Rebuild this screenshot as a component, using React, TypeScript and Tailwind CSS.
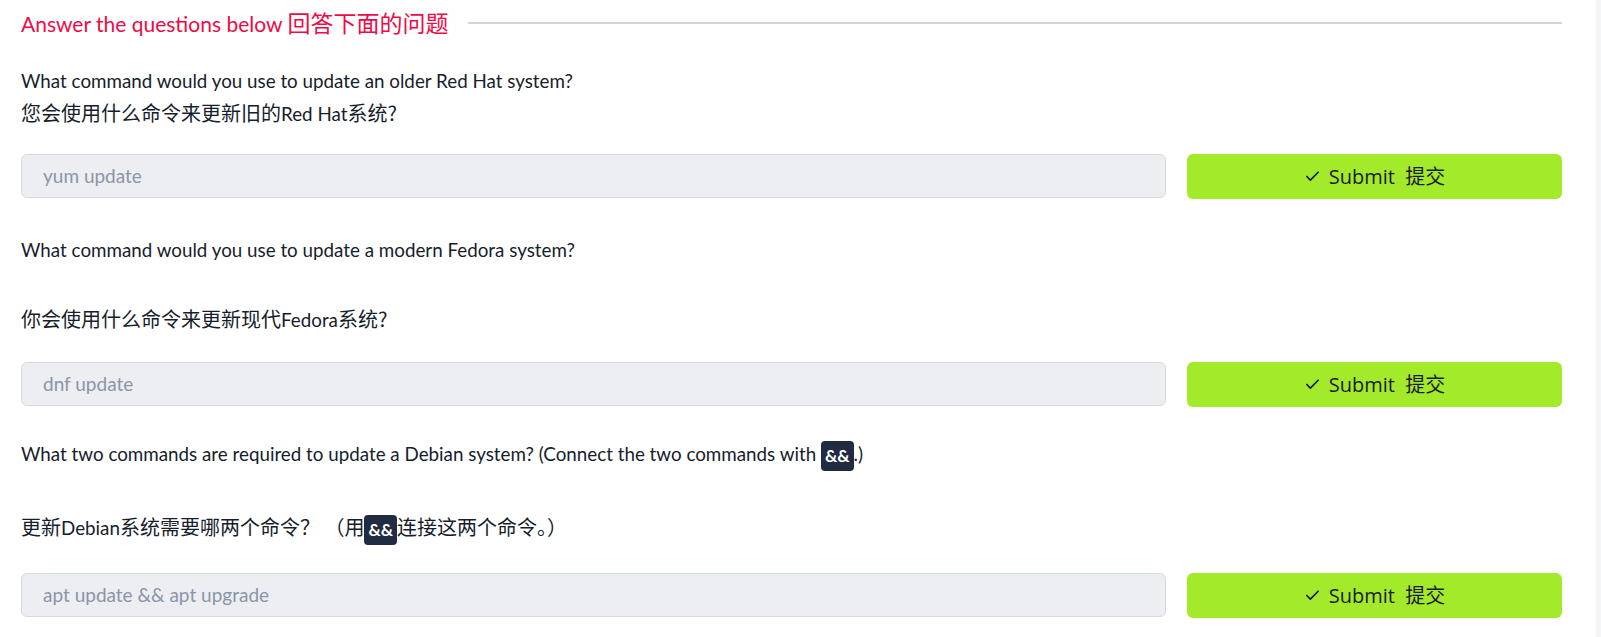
import React from "react";
import { Check } from "lucide-react";

const body = { fontFamily: 'Lato, "Noto Sans CJK SC", sans-serif' };
const cjk = { fontFamily: '"Noto Sans CJK SC", sans-serif' };

function L({ children }: { children: React.ReactNode }) {
  return (
    <span className="text-[18.8px]" style={body}>
      {children}
    </span>
  );
}

function Code({ children }: { children: React.ReactNode }) {
  return (
    <code
      className="inline-block h-[30px] px-[4px] rounded-[4px] bg-[#212c42] text-white font-bold text-[17px] leading-[30px] align-middle"
      style={body}
    >
      {children}
    </code>
  );
}

function AnswerRow({ placeholder, mt }: { placeholder: string; mt: string }) {
  return (
    <div className={`flex gap-[21px] ${mt}`}>
      <div className="flex-1 h-[44px] rounded-[6px] border border-[#d5d9e0] bg-[#eceef2] flex items-center pl-[21px] text-[19px] text-[#8b95a7]">
        {placeholder}
      </div>
      <button
        className="w-[375px] h-[45px] rounded-[6px] bg-[#a3ea2a] flex items-center justify-center gap-[8px] text-[#1b1b2b] text-[20px]"
        style={{ fontFamily: '"Open Sans", "Noto Sans CJK SC", sans-serif' }}
      >
        <Check size={17} strokeWidth={2.4} />
        <span>
          Submit&nbsp;&nbsp;<span style={cjk}>提交</span>
        </span>
      </button>
    </div>
  );
}

export default function App() {
  return (
    <div className="flex w-[1601px] h-[637px] bg-white overflow-hidden" style={body}>
      <div className="flex-1 pl-[21px] pr-[34px] text-[#161d2c] text-[18.8px] leading-[32px]">
        <div className="flex items-center h-[45px] gap-[20px]">
          <h2 className="text-[21px] text-[#f00a46] whitespace-nowrap leading-[32px]">
            Answer the questions below <span className="text-[23px]" style={cjk}>回答下面的问题</span>
          </h2>
          <div className="flex-1 h-[2px] bg-[#d1d5db]" />
        </div>

        <p className="mt-[20px]">
          What command would you use to update an older Red Hat system?
          <br />
          <span className="text-[20px]" style={cjk}>
            您会使用什么命令来更新旧的<L>Red Hat</L>系统?
          </span>
        </p>
        <AnswerRow placeholder="yum update" mt="mt-[24px]" />

        <p className="mt-[35px]">What command would you use to update a modern Fedora system?</p>
        <p className="mt-[37px] text-[20px]" style={cjk}>
          你会使用什么命令来更新现代<L>Fedora</L>系统?
        </p>
        <AnswerRow placeholder="dnf update" mt="mt-[26px]" />

        <p className="mt-[31px]">
          What two commands are required to update a Debian system? (Connect the two commands with{" "}
          <Code>&amp;&amp;</Code>.)
        </p>
        <p className="mt-[40px] text-[20px]" style={cjk}>
          更新<L>Debian</L>系统需要哪两个命令？ （用<Code>&amp;&amp;</Code>连接这两个命令。）
        </p>
        <AnswerRow placeholder="apt update && apt upgrade" mt="mt-[28px]" />
      </div>
      <div className="w-[5px] bg-[#f4f5f7]" />
    </div>
  );
}
